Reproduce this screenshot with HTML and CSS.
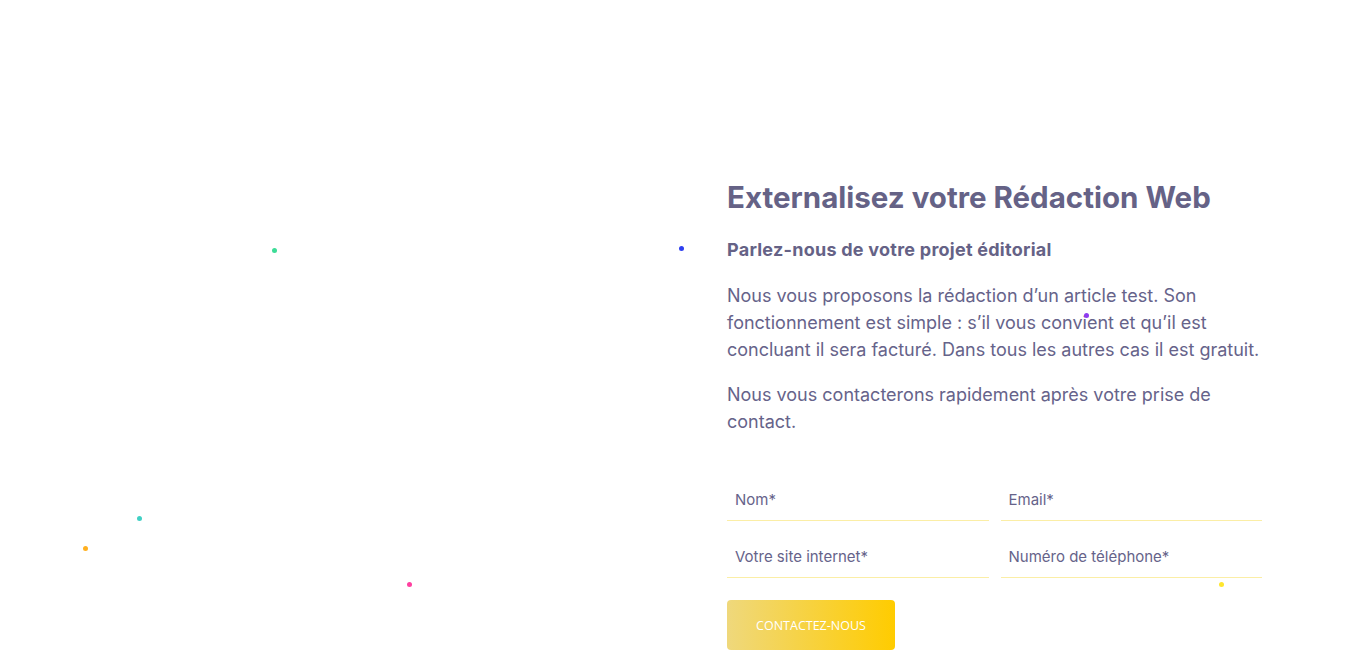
FILE: index.html
```html
<!DOCTYPE html>
<html lang="fr">
<head>
  <meta charset="UTF-8" />
  <meta name="viewport" content="width=device-width, initial-scale=1.0"/>
  <title>Externalisez votre Rédaction Web</title>
  <link rel="stylesheet" href="styles.css">
</head>
<body>
  <!-- floating confetti dots -->
  <span class="dot dot-green"></span>
  <span class="dot dot-blue"></span>
  <span class="dot dot-teal"></span>
  <span class="dot dot-orange"></span>
  <span class="dot dot-pink"></span>
  <span class="dot dot-purple"></span>
  <span class="dot dot-yellow"></span>

  <main class="contact">
    <div class="contact-visual"></div>

    <section class="contact-text">
      <h1>Externalisez votre Rédaction Web</h1>
      <h2>Parlez-nous de votre projet éditorial</h2>
      <p>Nous vous proposons la rédaction d’un article test. Son fonctionnement est simple : s’il vous convient et qu’il est concluant il sera facturé. Dans tous les autres cas il est gratuit.</p>
      <p>Nous vous contacterons rapidement après votre prise de contact.</p>

      <form class="contact-form">
        <div class="form-grid">
          <input type="text" placeholder="Nom*" />
          <input type="email" placeholder="Email*" />
          <input type="text" placeholder="Votre site internet*" />
          <input type="tel" placeholder="Numéro de téléphone*" />
        </div>
        <button type="button">Contactez-nous</button>
      </form>
    </section>
  </main>
</body>
</html>
```

FILE: styles.css
```css
body {
  font-family: Inter, "Noto Sans", sans-serif;
  margin: 0;
  padding: 0;
  background: #fff;
  color: #66638a;
  overflow: hidden;
}

.contact {
  display: grid;
  grid-template-columns: 683px 1fr;
  padding-top: 177px;
}

.contact-text {
  padding: 0 104px 0 44px;
}

.contact-text h1 {
  font-size: 29.5px;
  font-weight: 700;
  line-height: 40px;
  margin: 0 0 19px;
  color: #656286;
}

.contact-text h2 {
  font-size: 18px;
  font-weight: 700;
  letter-spacing: 0.25px;
  line-height: 28px;
  margin: 0 0 18px;
  color: #656286;
}

.contact-text p {
  font-size: 18px;
  line-height: 27px;
  margin: 0 0 18px;
}

.contact-form {
  margin-top: 45px;
}

.form-grid {
  display: grid;
  grid-template-columns: 1fr 1fr;
  column-gap: 12px;
  row-gap: 16px;
}

.form-grid input {
  font-family: inherit;
  font-size: 15px;
  color: #66638a;
  border: none;
  border-bottom: 1px solid #fbeea6;
  padding: 10px 8px 11px;
  height: 41px;
  box-sizing: border-box;
  outline: none;
  background: transparent;
}

.form-grid input::placeholder {
  color: #66638a;
}

.contact-form button {
  margin-top: 22px;
  width: 168px;
  height: 50px;
  border: none;
  border-radius: 4px;
  background: linear-gradient(90deg, #efd87c 0%, #ffcc00 100%);
  color: #fff;
  font-family: "Open Sans", sans-serif;
  font-size: 12.5px;
  text-transform: uppercase;
  cursor: pointer;
}

.dot {
  position: absolute;
  width: 5px;
  height: 5px;
  border-radius: 50%;
}

.dot-green { left: 272px; top: 248px; background: #3ddc97; }
.dot-blue { left: 679px; top: 246px; background: #2e3ff0; }
.dot-teal { left: 137px; top: 516px; background: #40d0c4; }
.dot-orange { left: 83px; top: 546px; background: #ffb020; }
.dot-pink { left: 407px; top: 582px; background: #ff3fa0; }
.dot-purple { left: 1084px; top: 313px; background: #8e3cf0; }
.dot-yellow { left: 1219px; top: 582px; background: #ffe62e; }
```
